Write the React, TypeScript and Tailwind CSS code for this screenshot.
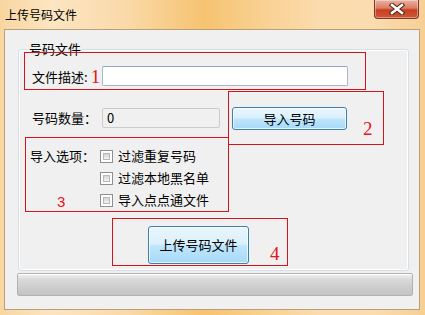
import type { ReactNode } from "react";

// Win7-style "upload number file" dialog with red annotation frames

function CloseButton() {
  return (
    <button className="w-[45px] h-[19px] shrink-0 flex items-center justify-center rounded-b-[4px] border border-t-0 border-[#7b3a2a] bg-[linear-gradient(to_bottom,#eab3a3_0%,#dc7b62_45%,#c8401f_55%,#d0583a_100%)] shadow-[inset_0_0_0_1px_rgba(255,255,255,0.35)]">
      <svg width="16" height="12" viewBox="0 0 16 12">
        <path d="M3 2 L13 10 M13 2 L3 10" stroke="#4a2219" strokeWidth="4.5" strokeLinecap="square" />
        <path d="M3 2 L13 10 M13 2 L3 10" stroke="#ffffff" strokeWidth="2.6" strokeLinecap="square" />
      </svg>
    </button>
  );
}

function RedBox({ className, children }: { className: string; children?: ReactNode }) {
  return <div className={`relative border border-[#d2141c] shrink-0 ${className}`}>{children}</div>;
}

function Checkbox({ label }: { label: string }) {
  return (
    <div className="h-[22px] flex items-center">
      <span className="w-[13px] h-[13px] border border-[#8e8f8f] bg-white p-[2px] shrink-0">
        <span className="block w-full h-full border border-[#b5b8bc] bg-[linear-gradient(to_bottom,#d3d3d3,#f4f4f4)]" />
      </span>
      <span className="ml-[5px] leading-[16px]">{label}</span>
    </div>
  );
}

function Aero({ className, children }: { className: string; children: ReactNode }) {
  return (
    <button
      className={`flex items-center justify-center rounded-[3px] border border-[#3c7fb1] bg-[linear-gradient(to_bottom,#eaf6fd_0%,#d9f0fc_48%,#bee6fd_52%,#a7d9f5_100%)] shadow-[inset_0_0_0_1px_rgba(255,255,255,0.7)] leading-[16px] text-[13px] ${className}`}
    >
      {children}
    </button>
  );
}

export default function App() {
  return (
    <div className="w-[425px] h-[315px] overflow-hidden flex flex-col bg-[linear-gradient(90deg,#f8d6a0_0%,#fce5c2_12%,#fad9a8_30%,#f6c371_48%,#f8cf8e_60%,#fbdcae_75%,#fadcb0_88%,#f7cf93_100%)] font-['Noto_Sans_CJK_SC',sans-serif] text-[13px] text-black">
      {/* title bar */}
      <div className="h-[29px] shrink-0 flex items-start">
        <span className="ml-[5px] mt-[7px] text-[12px] leading-[16px]">上传号码文件</span>
        <div className="ml-auto mr-[6px]">
          <CloseButton />
        </div>
      </div>

      {/* client area */}
      <div className="ml-[4px] w-[416px] h-[281px] shrink-0 border border-[#b89f78] bg-[#f0f0f0] flex flex-col">
        {/* group box */}
        <div className="relative ml-[13px] mt-[19px] w-[391px] h-[222px] shrink-0 rounded-[3px] border border-[#d5dfe5] shadow-[inset_0_0_0_1px_#ffffff] flex flex-col items-start">
          <span className="absolute left-[9px] -top-[8px] px-[1px] bg-[#f0f0f0] leading-[14px]">号码文件</span>

          {/* 1: description */}
          <RedBox className="ml-[5px] mt-[2px] w-[342px] h-[38px] flex items-start pl-[7px] pt-[13px]">
            <div className="w-[70px] h-[20px] mt-[1px] flex items-center">
              <span className="leading-[16px]">文件描述:</span>
              <span className="ml-[3px] font-['Liberation_Serif',serif] text-[19px] leading-[18px] text-[#e8141c]">1</span>
            </div>
            <input className="w-[246px] h-[20px] rounded-[2px] border border-[#a6b8cc] border-t-[#8fa6bf] bg-white outline-none px-[3px] text-[13px]" />
          </RedBox>

          {/* 2: count + import */}
          <div className="mt-[1px] flex items-start">
            <div className="pl-[13px] pt-[17px] flex items-center">
              <span className="w-[70px] h-[20px] flex items-center leading-[16px]">号码数量：</span>
              <div className="w-[118px] h-[20px] flex items-center border border-[#c9cdd2] rounded-[2px] bg-[#f0f0f0] pl-[4px] leading-[16px]">
                0
              </div>
            </div>
            <RedBox className="ml-[8px] w-[156px] h-[54px] flex items-start pl-[3px] pt-[15px]">
              <Aero className="w-[115px] h-[23px]">导入号码</Aero>
              <span className="ml-[16px] mt-[13px] font-['Liberation_Serif',serif] text-[19px] leading-[18px] text-[#e8141c]">2</span>
            </RedBox>
          </div>

          {/* 3: options */}
          <RedBox className="-mt-[8px] ml-[6px] w-[204px] h-[75px] pl-[4px] pt-[7px] grid grid-cols-[70px_1fr] content-start">
            <div className="h-[22px] flex items-center leading-[16px]">导入选项：</div>
            <Checkbox label="过滤重复号码" />
            <div />
            <Checkbox label="过滤本地黑名单" />
            <div className="h-[22px] flex items-center pl-[27px] pt-[4px] font-['Liberation_Sans',sans-serif] text-[15px] leading-[16px] text-[#e8141c]">
              3
            </div>
            <Checkbox label="导入点点通文件" />
          </RedBox>

          {/* 4: upload */}
          <RedBox className="mt-[6px] ml-[93px] w-[176px] h-[48px] flex items-start pl-[35px] pt-[7px]">
            <Aero className="w-[101px] h-[38px] border-[#2c628b] shadow-[inset_0_0_0_1px_#c9f0ff,inset_0_0_2px_2px_rgba(95,200,245,0.6)]">上传号码文件</Aero>
            <span className="ml-[21px] mt-[19px] font-['Liberation_Serif',serif] text-[19px] leading-[18px] text-[#e8141c]">4</span>
          </RedBox>
        </div>

        {/* progress bar */}
        <div className="ml-[12px] mt-[2px] w-[396px] h-[23px] shrink-0 rounded-[2px] border border-[#b2b2b2] bg-[linear-gradient(to_bottom,#f2f2f2_0%,#dadada_25%,#cbcbcb_70%,#c3c3c3_100%)] shadow-[inset_0_1px_0_#ffffff]" />
      </div>
    </div>
  );
}
